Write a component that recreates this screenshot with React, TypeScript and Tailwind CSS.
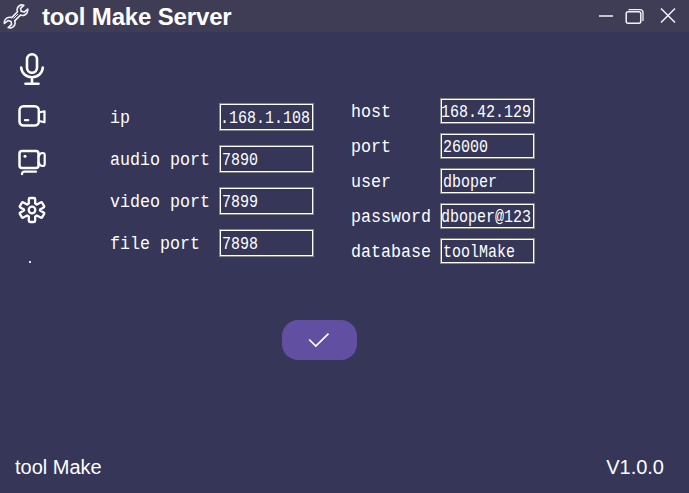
import React from "react";

const serverFields = [
  { label: "ip", value: ".168.1.108", overflow: true },
  { label: "audio port", value: "7890" },
  { label: "video port", value: "7899" },
  { label: "file port", value: "7898" },
];

const databaseFields = [
  { label: "host", value: "168.42.129", overflow: true },
  { label: "port", value: "26000" },
  { label: "user", value: "dboper" },
  { label: "password", value: "dboper@123", overflow: true },
  { label: "database", value: "toolMake" },
];

type FieldProps = { label: string; value: string; overflow?: boolean; wide?: boolean };

function Field({ label, value, overflow, wide }: FieldProps) {
  return (
    <label className={`flex items-center ${wide ? "h-7" : "h-[26px]"}`}>
      <span
        className={`origin-center scale-y-[1.12] whitespace-pre pt-px text-[16.67px] leading-6 ${wide ? "w-[109px]" : "w-[89px]"}`}
      >
        {label}
      </span>
      <span className="flex h-full w-[95px] border border-[#85857f]">
        <span
          className={`flex min-w-0 flex-1 items-center overflow-hidden border border-white pt-[3px] text-[15px] leading-5 ${overflow ? "justify-end pr-0.5" : "pl-px"}`}
        >
          <span className="scale-y-[1.18] whitespace-pre">{value}</span>
        </span>
      </span>
    </label>
  );
}

function WrenchIcon() {
  return (
    <svg className="ml-[3px] size-[26px]" viewBox="0 0 26 26" fill="none" stroke="#f4f3f8" strokeWidth="1.6" strokeLinejoin="round" strokeLinecap="round">
      <path d="M20.800 2.300C17.500 1 14.200 3.400 14.100 6.600c0 .8.100 1.500.4 2.200L8.700 14.600c-3.200-1.200-6.700.7-7.300 4-.1.700-.1 1.300 0 1.900l3.600-2.900 3 .8.600 3-3.400 3.200c3.400 1.200 6.700-1.100 6.900-4.500 0-.8-.1-1.500-.4-2.200l5.800-5.800c3.200 1.200 6.600-.8 7.200-4.200.1-.700.1-1.300 0-1.900l-3.500 3.100-3-.8-.7-2.900z" />
      <path d="m10.800 15.200 3.900-3.900" strokeWidth="1" />
    </svg>
  );
}

function MicIcon() {
  return (
    <svg className="h-[34px] w-[26px]" viewBox="0 0 26 34" fill="none" stroke="white" strokeWidth="2.6" strokeLinecap="round">
      <rect x="8" y="2.200" width="10" height="18.600" rx="5" />
      <path d="M2.200 15.500c.5 5.800 4.800 9.700 10.800 9.700s10.300-3.900 10.800-9.700M13 25.500v6M6.500 31.700h13" />
    </svg>
  );
}

function CameraIcon() {
  return (
    <svg className="h-6 w-7" viewBox="0 0 28 24" fill="none" stroke="white" strokeWidth="2.500" strokeLinecap="round" strokeLinejoin="round">
      <rect x="1.500" y="2.300" width="19.300" height="19.200" rx="4" />
      <path d="M21 8.500 26.500 7.300v11L21 17M7 16.200h3.200" strokeWidth="2.200" />
    </svg>
  );
}

function RecorderIcon() {
  return (
    <svg className="h-[27px] w-[29px]" viewBox="0 0 29 27" fill="none" stroke="white" strokeWidth="2.500" strokeLinecap="round" strokeLinejoin="round">
      <rect x="1.500" y="2" width="19" height="17" rx="2.500" />
      <path d="M20.500 7.500 22 5q1-1 2.700-1 2 0 2 2v9q0 2-2 2-1.700 0-2.700-1l-1.500-2.500M4 25.200q0-2.500 2.500-2.500H18" strokeWidth="2.200" />
      <circle cx="7" cy="7.200" r="1.500" fill="white" stroke="none" />
    </svg>
  );
}

function GearIcon() {
  return (
    <svg className="size-7" viewBox="0 0 28 28" fill="none" stroke="white" strokeWidth="2.300" strokeLinejoin="round">
      <path d="M12 2h4q1.200 0 1.200 1.200v4.400l1.600 1 3.800-2.200q1-.6 1.600.4l1.800 3q.6 1-.4 1.600L22 13.600v.8l3.600 2.200q1 .6.4 1.600l-1.800 3q-.6 1-1.600.4l-3.800-2.200-1.600 1v4.400q0 1.200-1.200 1.200h-4q-1.200 0-1.200-1.200v-4.400l-1.600-1-3.800 2.200q-1 .6-1.600-.4L2 18.200q-.6-1 .4-1.600L6 14.400v-.8l-3.600-2.200q-1-.6-.4-1.600l1.800-3q.6-1 1.600-.4l3.800 2.200 1.600-1V3.200Q10.800 2 12 2z" />
      <circle cx="14" cy="14" r="3.300" />
    </svg>
  );
}

export default function App() {
  return (
    <div className="flex h-[493px] w-[689px] flex-col overflow-hidden bg-[#353658] font-['Liberation_Sans',sans-serif] text-white">
      <header className="flex h-8 shrink-0 items-center bg-[#3f3c56]">
        <WrenchIcon />
        <h1 className="ml-[13px] flex-1 pt-px text-[24px] leading-8 font-bold tracking-[-0.16px] whitespace-nowrap">tool Make Server</h1>
        <svg className="mr-[11px] h-8 w-20" viewBox="0 0 80 32" fill="none" stroke="#f4f2f6" strokeWidth="1.500">
          <path d="M1 16h14" />
          <rect x="28.200" y="11.700" width="14.600" height="11.600" rx="2" />
          <path d="M30.500 9.700H42q3 0 3 3V21" strokeWidth="1.300" />
          <path d="m63 8.500 14 14m0-14-14 14" />
        </svg>
      </header>

      <div className="flex min-h-0 flex-1">
        <nav className="flex w-16 flex-col items-center pt-5">
          <MicIcon />
          <div className="mt-[18px]"><CameraIcon /></div>
          <div className="mt-[21px]"><RecorderIcon /></div>
          <div className="mt-5"><GearIcon /></div>
          <span className="mt-[37px] mr-[5px] h-0.5 w-0.5 bg-[#dfe8f2]" />
        </nav>

        <main className="flex flex-1 flex-col">
          <div className="flex h-[288px] items-start gap-[37px] pl-[46px] font-['Liberation_Mono',monospace]">
            <div className="flex flex-col gap-3.5 pt-[71px]">
              {serverFields.map((field) => <Field key={field.label} {...field} wide />)}
            </div>
            <div className="flex flex-col gap-[9px] pt-[66px]">
              {databaseFields.map((field) => <Field key={field.label} {...field} />)}
            </div>
          </div>
          <button aria-label="Confirm" className="ml-[218px] flex h-10 w-[75px] items-center justify-center rounded-2xl bg-[#6150a1]">
            <svg className="mr-0.5 h-4 w-[22px]" viewBox="0 0 22 16" fill="none" stroke="white" strokeWidth="1.700">
              <path d="m1.200 7.500 6.600 6.500L20.500 1.700" />
            </svg>
          </button>
        </main>
      </div>

      <footer className="flex h-[52px] shrink-0 items-center justify-between pr-[25px] pl-[15px] text-[20px] leading-6">
        <span>tool Make</span>
        <span>V1.0.0</span>
      </footer>
    </div>
  );
}
